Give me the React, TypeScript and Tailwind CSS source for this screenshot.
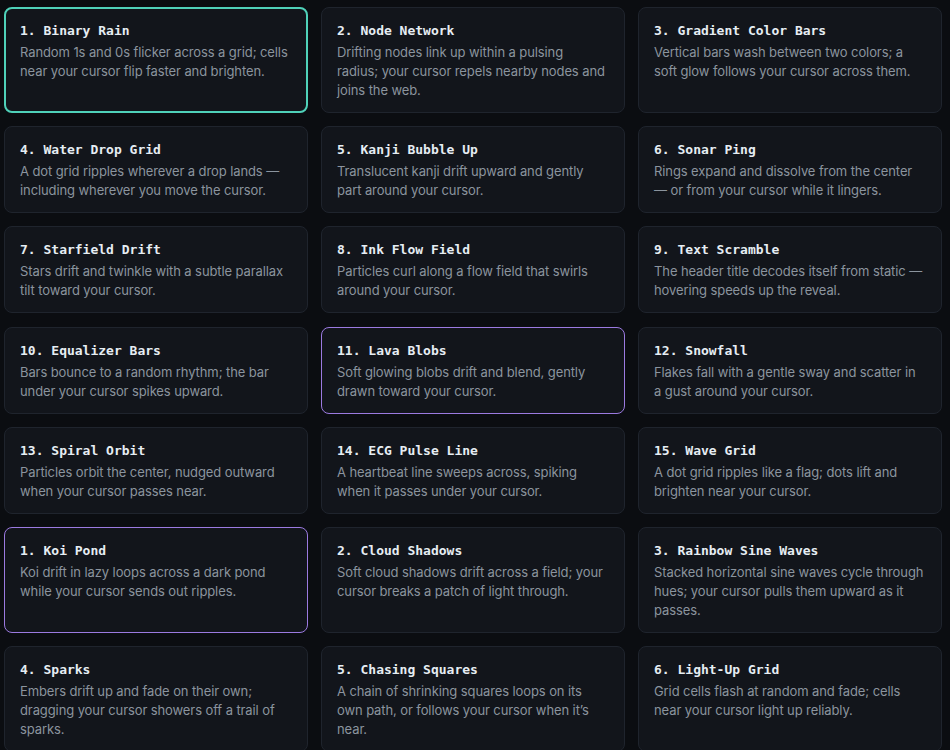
const effects = [
  { title: "1. Binary Rain", desc: "Random 1s and 0s flicker across a grid; cells near your cursor flip faster and brighten.", accent: "teal" },
  { title: "2. Node Network", desc: "Drifting nodes link up within a pulsing radius; your cursor repels nearby nodes and joins the web." },
  { title: "3. Gradient Color Bars", desc: "Vertical bars wash between two colors; a soft glow follows your cursor across them." },
  { title: "4. Water Drop Grid", desc: "A dot grid ripples wherever a drop lands — including wherever you move the cursor." },
  { title: "5. Kanji Bubble Up", desc: "Translucent kanji drift upward and gently part around your cursor." },
  { title: "6. Sonar Ping", desc: "Rings expand and dissolve from the center — or from your cursor while it lingers." },
  { title: "7. Starfield Drift", desc: "Stars drift and twinkle with a subtle parallax tilt toward your cursor." },
  { title: "8. Ink Flow Field", desc: "Particles curl along a flow field that swirls around your cursor." },
  { title: "9. Text Scramble", desc: "The header title decodes itself from static — hovering speeds up the reveal." },
  { title: "10. Equalizer Bars", desc: "Bars bounce to a random rhythm; the bar under your cursor spikes upward." },
  { title: "11. Lava Blobs", desc: "Soft glowing blobs drift and blend, gently drawn toward your cursor.", accent: "purple" },
  { title: "12. Snowfall", desc: "Flakes fall with a gentle sway and scatter in a gust around your cursor." },
  { title: "13. Spiral Orbit", desc: "Particles orbit the center, nudged outward when your cursor passes near." },
  { title: "14. ECG Pulse Line", desc: "A heartbeat line sweeps across, spiking when it passes under your cursor." },
  { title: "15. Wave Grid", desc: "A dot grid ripples like a flag; dots lift and brighten near your cursor." },
  { title: "1. Koi Pond", desc: "Koi drift in lazy loops across a dark pond while your cursor sends out ripples.", accent: "purple" },
  { title: "2. Cloud Shadows", desc: "Soft cloud shadows drift across a field; your cursor breaks a patch of light through." },
  { title: "3. Rainbow Sine Waves", desc: "Stacked horizontal sine waves cycle through hues; your cursor pulls them upward as it passes." },
  { title: "4. Sparks", desc: "Embers drift up and fade on their own; dragging your cursor showers off a trail of sparks." },
  { title: "5. Chasing Squares", desc: "A chain of shrinking squares loops on its own path, or follows your cursor when it’s near." },
  { title: "6. Light-Up Grid", desc: "Grid cells flash at random and fade; cells near your cursor light up reliably." },
];

function EffectCard({ title, desc, accent }: { title: string; desc: string; accent?: string }) {
  // the active card gets a thicker teal ring, so its padding shrinks by the extra pixel
  const ring =
    accent === "teal"
      ? "border-2 border-[#4fd1b9] pl-[14px] pr-[16px] pt-[14px] pb-[11px]"
      : accent === "purple"
        ? "border border-[#9b7ae0] pl-[15px] pr-[17px] pt-[15px] pb-[12px]"
        : "border border-[#1f242d] pl-[15px] pr-[17px] pt-[15px] pb-[12px]";
  return (
    <div className={`rounded-lg bg-[#12151b] ${ring}`}>
      <h3 className="font-['DejaVu_Sans_Mono',monospace] text-[13px] font-bold leading-[16px] text-[#e6edf3]">
        {title}
      </h3>
      <p className="mt-[4px] font-['Inter',sans-serif] text-[13px] leading-[19px] tracking-[-0.1px] text-[#8b949e]">
        {desc}
      </p>
    </div>
  );
}

export default function App() {
  return (
    <div className="min-h-screen bg-[#0b0d11] pl-[4px] pt-[7px] pr-[8px]">
      <div className="grid grid-cols-[304px_304px_304px] gap-x-[13px] gap-y-[13.2px]">
        {effects.map((e) => (
          <EffectCard key={e.title + e.desc} {...e} />
        ))}
      </div>
    </div>
  );
}
